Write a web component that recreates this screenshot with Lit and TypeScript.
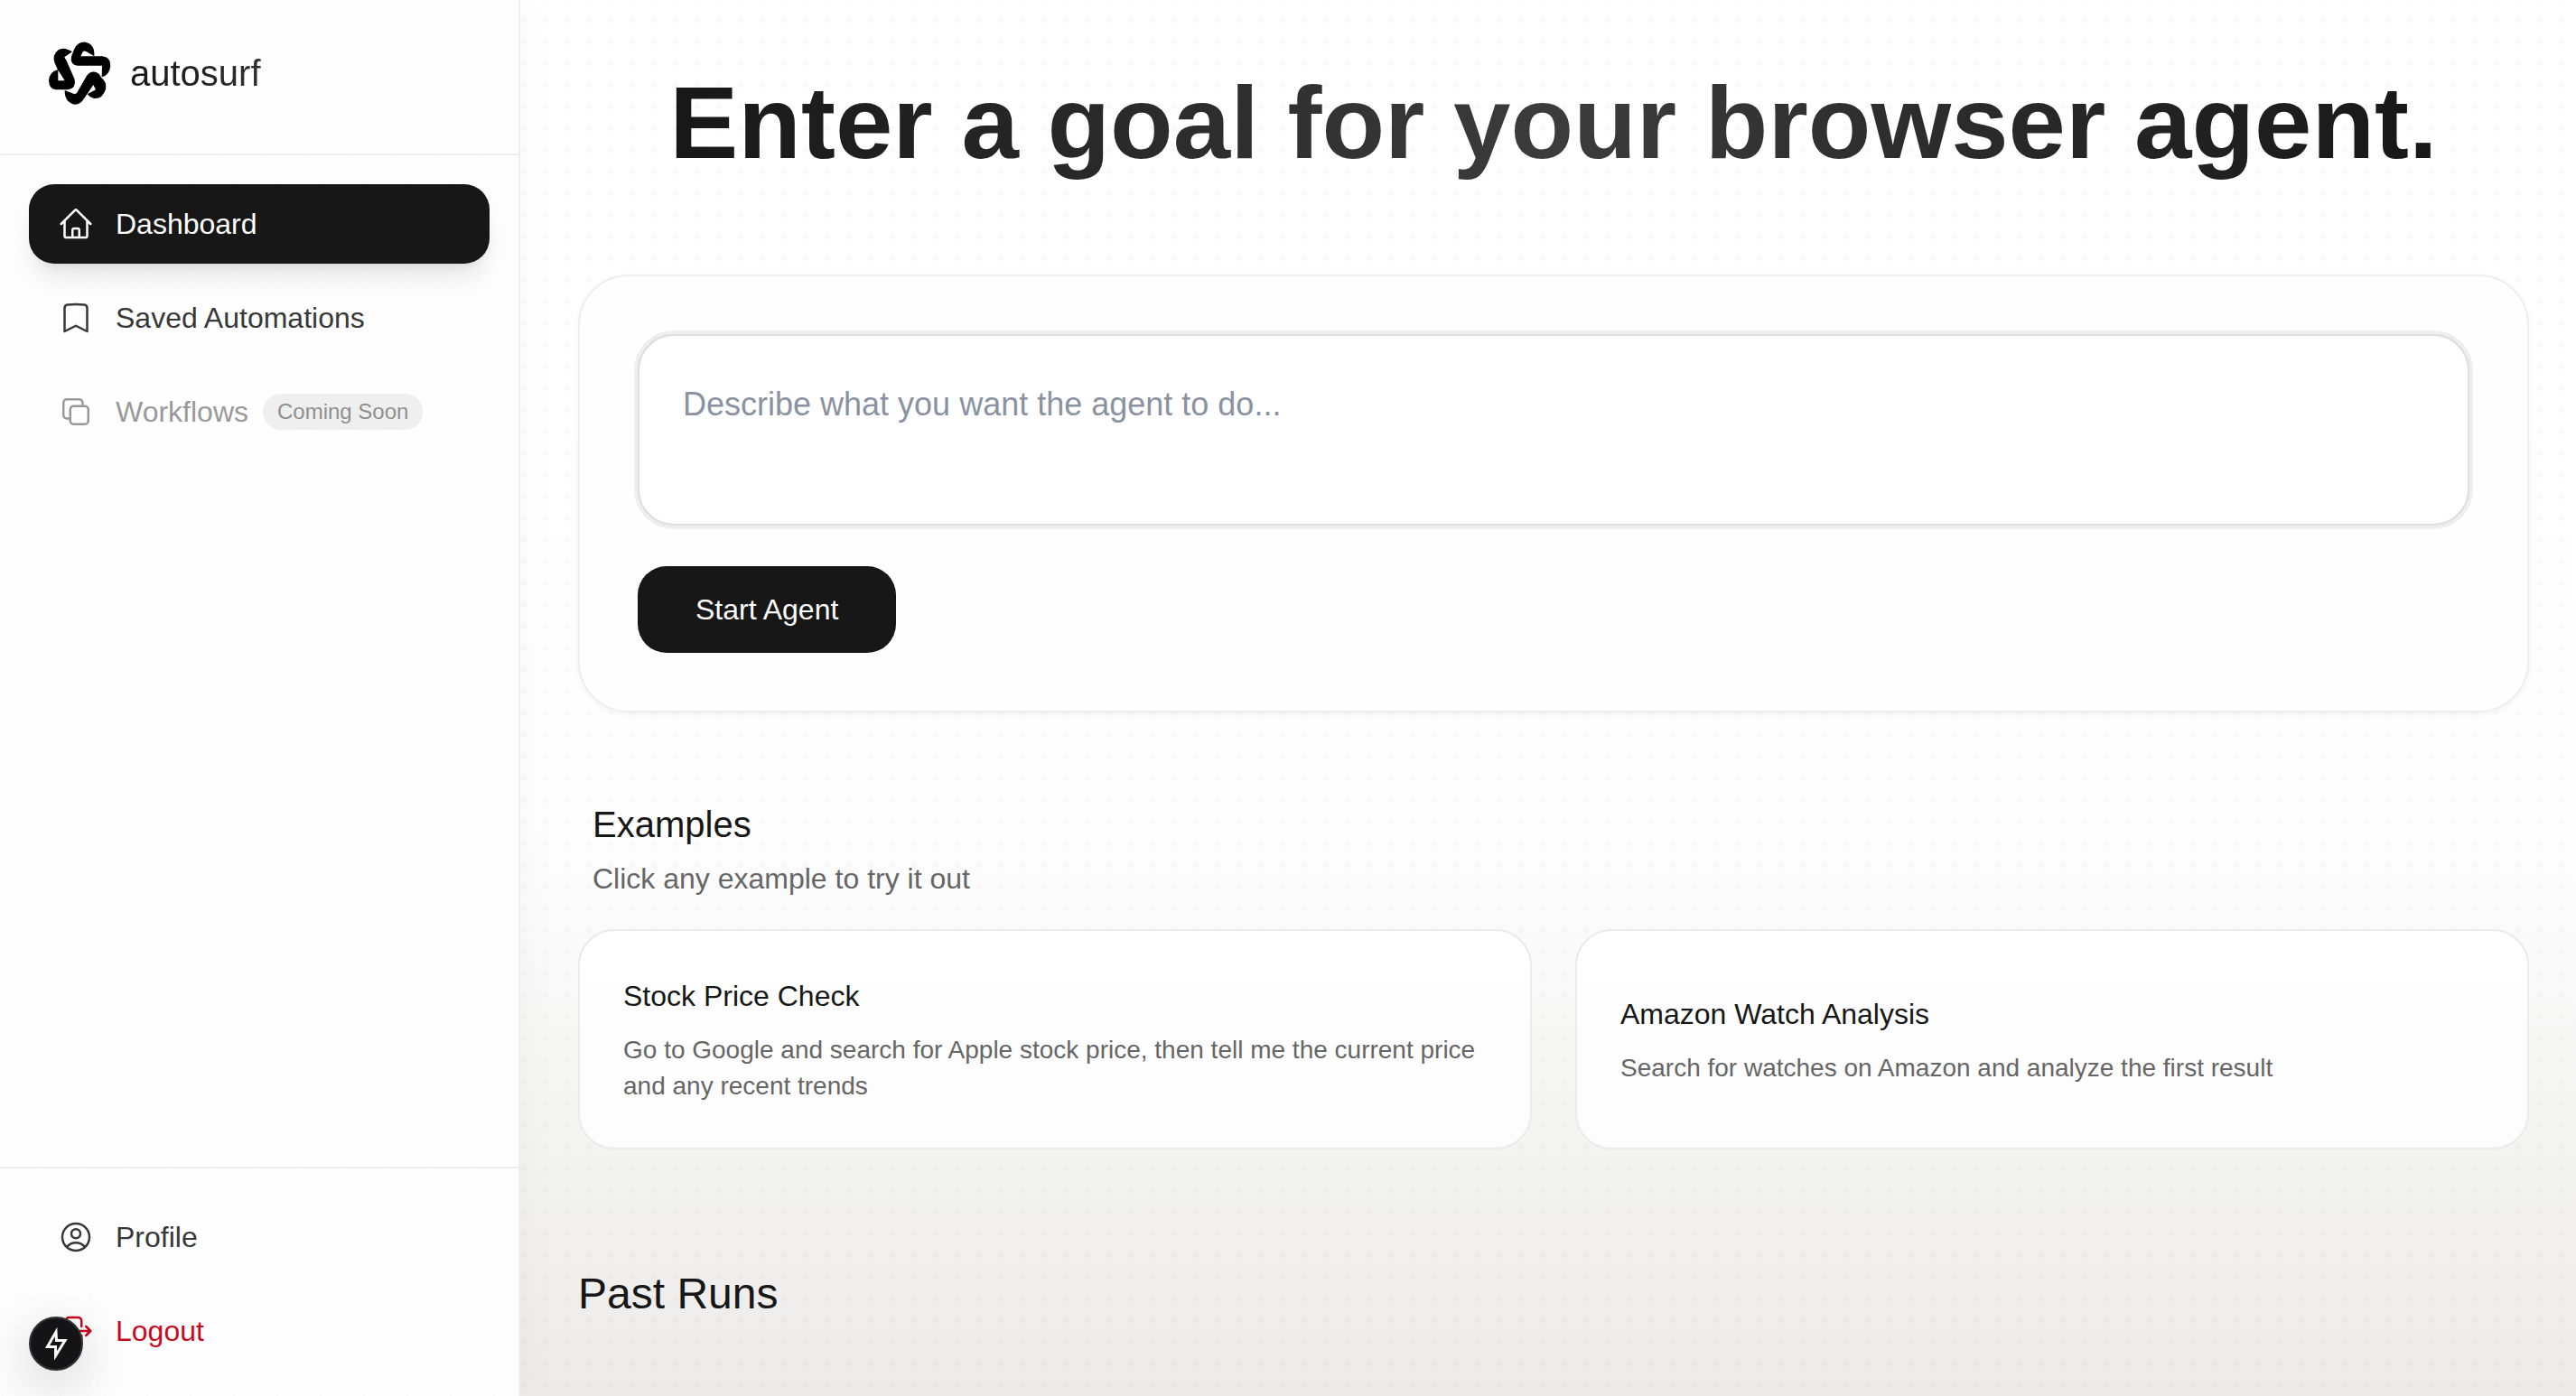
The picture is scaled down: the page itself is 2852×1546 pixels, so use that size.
import { LitElement, html, css, svg } from "lit";
import { customElement } from "lit/decorators.js";

type NavItem = { label: string; icon: unknown; active?: boolean; badge?: string; danger?: boolean };

const home = svg`<path d="m2.25 12 8.954-8.955c.44-.439 1.152-.439 1.591 0L21.75 12M4.5 9.75v10.125c0 .621.504 1.125 1.125 1.125H9.75v-4.875c0-.621.504-1.125 1.125-1.125h2.25c.621 0 1.125.504 1.125 1.125V21h4.125c.621 0 1.125-.504 1.125-1.125V9.75M8.25 21h8.25"/>`;
const bookmark = svg`<path d="M17.593 3.322c1.1.128 1.907 1.077 1.907 2.185V21L12 17.25 4.5 21V5.507c0-1.108.806-2.057 1.907-2.185a48.507 48.507 0 0 1 11.186 0Z"/>`;
const copy = svg`<path d="M16.5 8.25V6A2.25 2.25 0 0 0 14.25 3.75H6A2.25 2.25 0 0 0 3.75 6v8.25A2.25 2.25 0 0 0 6 16.5h2.25"/><rect x="8.25" y="8.25" width="12" height="12" rx="2.25"/>`;
const user = svg`<path d="M17.982 18.725A7.488 7.488 0 0 0 12 15.75a7.488 7.488 0 0 0-5.982 2.975m11.963 0a9 9 0 1 0-11.963 0m11.963 0A8.966 8.966 0 0 1 12 21a8.966 8.966 0 0 1-5.982-2.275M15 9.75a3 3 0 1 1-6 0 3 3 0 0 1 6 0Z"/>`;
const logout = svg`<path d="M15.75 9V5.25A2.25 2.25 0 0 0 13.5 3h-6a2.25 2.25 0 0 0-2.25 2.25v13.5A2.25 2.25 0 0 0 7.5 21h6a2.25 2.25 0 0 0 2.25-2.25V15M9 12h12.75M18.75 9l3 3-3 3"/>`;

const MAIN_NAV: NavItem[] = [
  { label: "Dashboard", icon: home, active: true },
  { label: "Saved Automations", icon: bookmark },
  { label: "Workflows", icon: copy, badge: "Coming Soon" },
];
const ACCOUNT_NAV: NavItem[] = [
  { label: "Profile", icon: user },
  { label: "Logout", icon: logout, danger: true },
];
const EXAMPLES = [
  {
    title: "Stock Price Check",
    text: "Go to Google and search for Apple stock price, then tell me the current price and any recent trends",
  },
  { title: "Amazon Watch Analysis", text: "Search for watches on Amazon and analyze the first result" },
];

@customElement("app-root")
export class AppRoot extends LitElement {
  static styles = css`
    :host {
      display: block;
      min-height: 100vh;
      font-family: "Liberation Sans", Arial, sans-serif;
      font-size: 32px;
      line-height: 48px;
      color: #171717;
    }
    * { box-sizing: border-box; margin: 0; }
    button, textarea { font: inherit; color: inherit; }
    .shell {
      display: grid;
      grid-template-columns: 576px minmax(0, 1fr);
      height: 100vh;
      overflow: hidden;
    }
    .sidebar {
      position: relative;
      z-index: 1;
      isolation: isolate;
      display: flex;
      flex-direction: column;
      background: #fefefe;
      border-right: 2px solid #eeeeee;
      box-shadow: 0 0 48px rgb(0 0 0 / 0.03);
    }
    .texture {
      position: absolute;
      inset: 0;
      z-index: -1;
      width: 100%;
      height: 100%;
    }
    .squiggle { fill: none; stroke: #fbfbfb; stroke-width: 1.5; stroke-linecap: round; }
    .plus { fill: none; stroke: #000000; stroke-opacity: 0.024; stroke-width: 2; }
    .brand {
      display: flex;
      align-items: center;
      gap: 16px;
      height: 172px;
      padding: 0 48px 8px;
      border-bottom: 2px solid #eeeeee;
      font-size: 40px;
    }
    .logo { width: 80px; height: 80px; fill: #000000; }
    .brand-name {
      background: linear-gradient(90deg, #171717, #303030);
      background-clip: text;
      color: transparent;
    }
    .nav {
      display: flex;
      flex-direction: column;
      gap: 16px;
      padding: 32px;
    }
    .account { margin-top: auto; border-top: 2px solid #eeeeee; padding-bottom: 28px; }
    .item {
      display: flex;
      align-items: center;
      gap: 24px;
      height: 88px;
      padding: 0 32px;
      border-radius: 28px;
      color: #383838;
      text-decoration: none;
    }
    .active {
      background: #171717;
      color: #ffffff;
      box-shadow: 0 20px 30px -6px rgb(0 0 0 / 0.1), 0 8px 12px -8px rgb(0 0 0 / 0.1);
    }
    .disabled { color: #999999; }
    .danger { color: #c80a1e; }
    .icon {
      width: 40px;
      height: 40px;
      fill: none;
      stroke: currentColor;
      stroke-width: 1.5;
      stroke-linecap: round;
      stroke-linejoin: round;
    }
    .badge {
      margin-left: -8px;
      padding: 0 16px;
      border-radius: 20px;
      background: #efefef;
      color: #8f8f8f;
      font-size: 24px;
      line-height: 40px;
    }
    .main {
      position: relative;
      isolation: isolate;
      display: flex;
      flex-direction: column;
      padding: 64px 52px 0 64px;
      background: linear-gradient(#ffffff 0%, #fefefe 57%, #fbfbfb 66%, #f3f3f2 83%, #efeeec 93%, #ecebea 100%);
    }
    .title {
      align-self: center;
      font-size: 114px;
      line-height: 144px;
      font-weight: 700;
      white-space: nowrap;
      background: linear-gradient(90deg, #171717, #3c3c3c 50%, #171717);
      background-clip: text;
      color: transparent;
    }
    .composer {
      display: flex;
      flex-direction: column;
      align-items: flex-start;
      gap: 45px;
      margin-top: 96px;
      padding: 64px;
      border: 2px solid #eeeeee;
      border-radius: 56px;
      background: #fefefe;
      box-shadow: 0 2px 6px rgb(0 0 0 / 0.05);
    }
    .prompt {
      display: block;
      width: 100%;
      height: 212px;
      padding: 48px;
      border: 2px solid #dedede;
      border-radius: 40px;
      outline: none;
      box-shadow: 0 0 0 4px #eeeeee;
      background: #ffffff;
      font-size: 36px;
      line-height: 56px;
      resize: none;
    }
    .prompt::placeholder { color: #8a92a2; opacity: 1; }
    .start {
      height: 96px;
      padding: 0 64px;
      border: 0;
      border-radius: 32px;
      background: #171717;
      color: #ffffff;
    }
    .examples-head { padding: 96px 16px 0; }
    .h2 { font-size: 40px; line-height: 56px; font-weight: 400; }
    .sub { margin-top: 8px; color: #666666; }
    .cards {
      display: grid;
      grid-template-columns: repeat(2, minmax(0, 1fr));
      gap: 48px;
      margin-top: 32px;
    }
    .card {
      display: flex;
      flex-direction: column;
      justify-content: center;
      gap: 16px;
      height: 244px;
      padding: 0 48px;
      border: 2px solid #ebebeb;
      border-radius: 40px;
      background: linear-gradient(#ffffff, #fcfcfc);
      text-align: left;
    }
    .card-text { color: #666666; font-size: 28px; line-height: 40px; }
    .runs { margin-top: 128px; font-size: 48px; line-height: 64px; font-weight: 400; }
    .dev {
      position: absolute;
      z-index: 2;
      left: 32px;
      bottom: 28px;
      display: grid;
      place-items: center;
      width: 60px;
      height: 60px;
      padding: 0;
      border: 2px solid #333333;
      border-radius: 50%;
      background: #141416;
      color: #ffffff;
      box-shadow: 0 16px 60px rgb(0 0 0 / 0.2);
    }
    .bolt { width: 36px; height: 36px; fill: none; stroke: currentColor; stroke-width: 3; }
  `;

  private renderItem(item: NavItem) {
    const state = item.active ? "active" : item.badge ? "disabled" : item.danger ? "danger" : "";
    return html`<a class="item ${state}" href="#">
      <svg class="icon" viewBox="0 0 24 24" aria-hidden="true">${item.icon}</svg>
      <span>${item.label}</span>
      ${item.badge ? html`<span class="badge">${item.badge}</span>` : null}
    </a>`;
  }

  render() {
    return html`<div class="shell">
        <aside class="sidebar">
          <svg class="texture" aria-hidden="true">
            <defs>
              <pattern id="squiggles" x="-2" y="24" width="48" height="48" patternUnits="userSpaceOnUse">
                <path class="squiggle" d="M5 18.500V25M14 19l-2 6M19 23l5-2 8 1M34 20l7 4M8 27l-4 7M19 32l6 4M3 36l4 2h11M2 46h6M3 4l6 3M18 4l7 4"/>
              </pattern>
            </defs>
            <rect width="100%" height="100%" fill="url(#squiggles)"/>
          </svg>
          <div class="brand">
            <svg class="logo" viewBox="24 33 240 240" aria-hidden="true">
              <path d="M193 97 166 81Q157 76 153 86L148 97H220Q247 99 247 128 245 158 218 166L219 128H138Q112 125 117 98L126 74Q138 48 164 50 196 56 193 97Z"/>
              <path fill-rule="evenodd" d="M120 82Q92 64 74 76 52 92 62 120L72 142Q44 148 42 178 44 207 66 208H106Q134 203 128 174L101 112 94 100ZM73 143V178H95Z"/>
              <path d="M95 210 128 223 135 219 166 165Q178 146 196 149 210 152 216 167 236 182 231 207 220 240 192 237 180 235 170 223L198 208 190 192 159 238Q147 258 128 257 94 250 95 210Z"/>
            </svg>
            <span class="brand-name">autosurf</span>
          </div>
          <nav class="nav">${MAIN_NAV.map((i) => this.renderItem(i))}</nav>
          <nav class="nav account">${ACCOUNT_NAV.map((i) => this.renderItem(i))}</nav>
        </aside>
        <main class="main">
          <svg class="texture" aria-hidden="true">
            <defs>
              <pattern id="pluses" x="0" y="10" width="24" height="24" patternUnits="userSpaceOnUse">
                <path class="plus" d="M0 12h8M4 8v8"/>
              </pattern>
            </defs>
            <rect width="100%" height="100%" fill="url(#pluses)"/>
          </svg>
          <h1 class="title">Enter a goal for your browser agent.</h1>
          <section class="composer">
            <textarea class="prompt" aria-label="Goal" placeholder="Describe what you want the agent to do..."></textarea>
            <button class="start">Start Agent</button>
          </section>
          <div class="examples-head">
            <h2 class="h2">Examples</h2>
            <p class="sub">Click any example to try it out</p>
          </div>
          <div class="cards">
            ${EXAMPLES.map((e) => html`<button class="card"><span>${e.title}</span><span class="card-text">${e.text}</span></button>`)}
          </div>
          <h2 class="runs">Past Runs</h2>
        </main>
      </div>
      <button class="dev" aria-label="Developer tools">
        <svg class="bolt" viewBox="0 0 36 36" aria-hidden="true"><path d="M18 5 8.500 21.500h9v10L28 14.500h-9.500Z"/></svg>
      </button>`;
  }
}
